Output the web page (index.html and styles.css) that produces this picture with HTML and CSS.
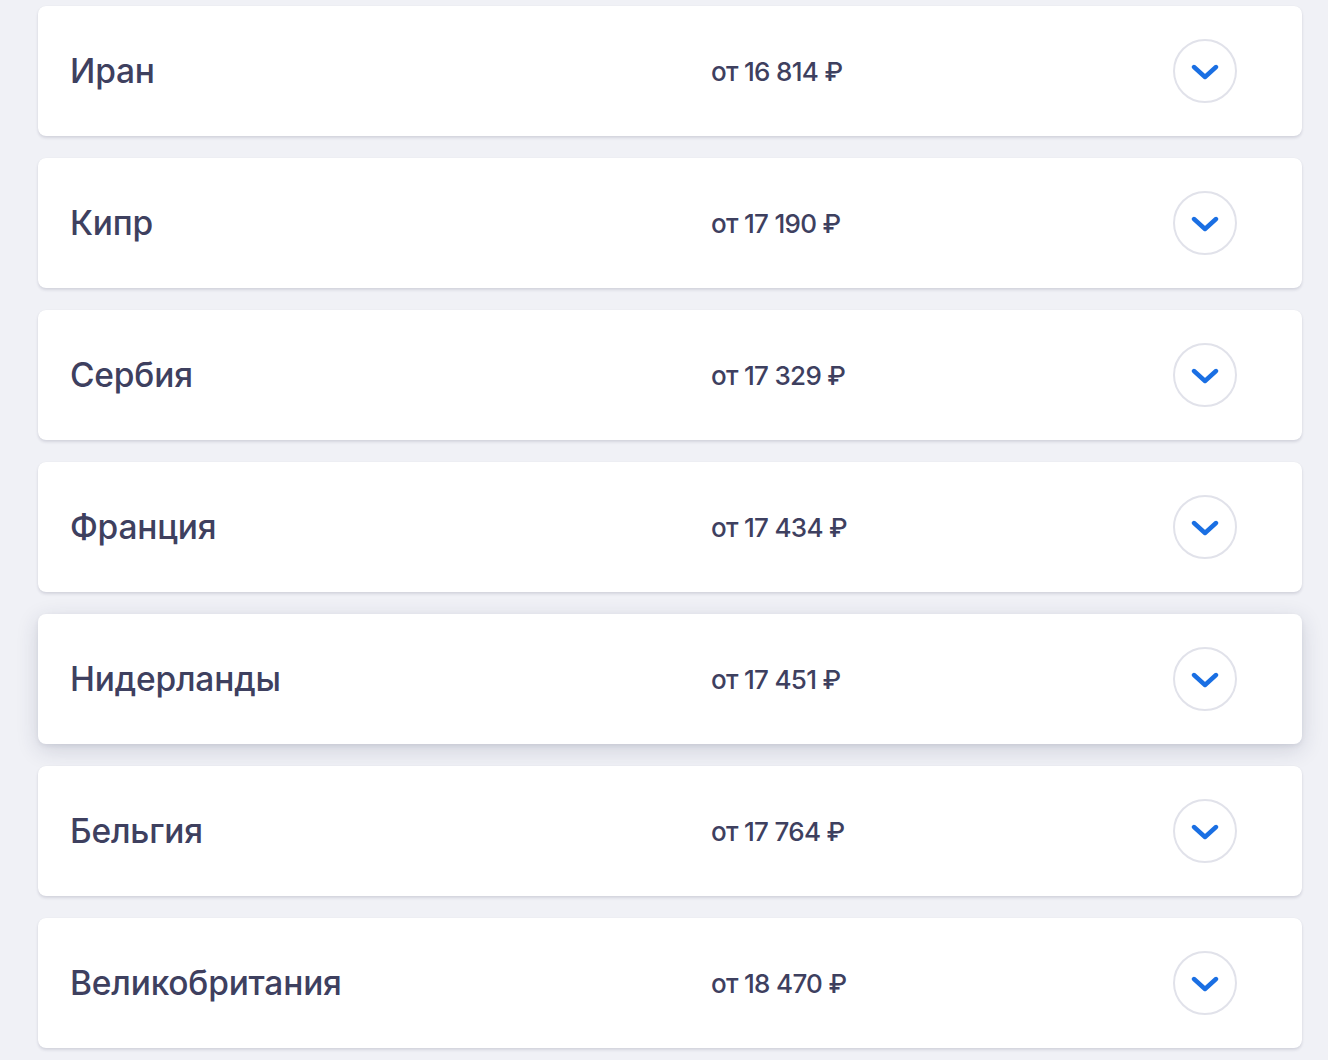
FILE: index.html
```html
<!DOCTYPE html>
<html lang="ru">
<head>
<meta charset="utf-8">
<title>Страны</title>
<link rel="stylesheet" href="styles.css">
</head>
<body>
<ul class="list">
  <li class="card"><span class="name">Иран</span><span class="price">от 16 814 ₽</span><button class="toggle" aria-label="Развернуть"><svg viewBox="0 0 28 16" width="28" height="16"><path d="M3 3 L14 13 L25 3" fill="none" stroke="#1a6fe3" stroke-width="4.4" stroke-linecap="round" stroke-linejoin="round"/></svg></button></li>
  <li class="card"><span class="name">Кипр</span><span class="price">от 17 190 ₽</span><button class="toggle" aria-label="Развернуть"><svg viewBox="0 0 28 16" width="28" height="16"><path d="M3 3 L14 13 L25 3" fill="none" stroke="#1a6fe3" stroke-width="4.4" stroke-linecap="round" stroke-linejoin="round"/></svg></button></li>
  <li class="card"><span class="name">Сербия</span><span class="price">от 17 329 ₽</span><button class="toggle" aria-label="Развернуть"><svg viewBox="0 0 28 16" width="28" height="16"><path d="M3 3 L14 13 L25 3" fill="none" stroke="#1a6fe3" stroke-width="4.4" stroke-linecap="round" stroke-linejoin="round"/></svg></button></li>
  <li class="card"><span class="name">Франция</span><span class="price">от 17 434 ₽</span><button class="toggle" aria-label="Развернуть"><svg viewBox="0 0 28 16" width="28" height="16"><path d="M3 3 L14 13 L25 3" fill="none" stroke="#1a6fe3" stroke-width="4.4" stroke-linecap="round" stroke-linejoin="round"/></svg></button></li>
  <li class="card card-hover"><span class="name">Нидерланды</span><span class="price">от 17 451 ₽</span><button class="toggle" aria-label="Развернуть"><svg viewBox="0 0 28 16" width="28" height="16"><path d="M3 3 L14 13 L25 3" fill="none" stroke="#1a6fe3" stroke-width="4.4" stroke-linecap="round" stroke-linejoin="round"/></svg></button></li>
  <li class="card"><span class="name">Бельгия</span><span class="price">от 17 764 ₽</span><button class="toggle" aria-label="Развернуть"><svg viewBox="0 0 28 16" width="28" height="16"><path d="M3 3 L14 13 L25 3" fill="none" stroke="#1a6fe3" stroke-width="4.4" stroke-linecap="round" stroke-linejoin="round"/></svg></button></li>
  <li class="card"><span class="name">Великобритания</span><span class="price">от 18 470 ₽</span><button class="toggle" aria-label="Развернуть"><svg viewBox="0 0 28 16" width="28" height="16"><path d="M3 3 L14 13 L25 3" fill="none" stroke="#1a6fe3" stroke-width="4.4" stroke-linecap="round" stroke-linejoin="round"/></svg></button></li>
</ul>
</body>
</html>
```

FILE: styles.css
```css
* { box-sizing: border-box; }
html, body { margin: 0; padding: 0; }
body {
  background: #f0f1f6;
  font-family: "Inter", "Noto Sans", sans-serif;
  color: #3e405f;
  width: 1328px;
  height: 1060px;
  overflow: hidden;
}
.list {
  list-style: none;
  margin: 0;
  padding: 6px 26px 0 38px;
  display: flex;
  flex-direction: column;
  gap: 22px;
}
.card {
  height: 130px;
  background: #fff;
  border-radius: 8px;
  box-shadow: 0 2px 3px rgba(40, 45, 80, 0.14), 0 0 1px rgba(40, 45, 80, 0.08);
  display: grid;
  grid-template-columns: 641px 1fr 64px;
  align-items: center;
  padding: 0 65px 0 32px;
}
.card-hover {
  box-shadow: 0 6px 22px rgba(40, 45, 80, 0.16), 0 2px 4px rgba(40, 45, 80, 0.08);
}
.name {
  font-size: 33.5px;
  font-weight: 500;
  letter-spacing: -0.2px;
  margin-bottom: 1px;
}
.price {
  font-size: 26px;
  font-weight: 500;
  letter-spacing: -0.7px;
}
.toggle {
  width: 64px;
  height: 64px;
  border-radius: 50%;
  border: 2px solid #e1e2ea;
  background: #fff;
  display: flex;
  align-items: center;
  justify-content: center;
  padding: 0;
  padding-top: 2px;
  cursor: pointer;
}
.toggle svg { display: block; }
```
